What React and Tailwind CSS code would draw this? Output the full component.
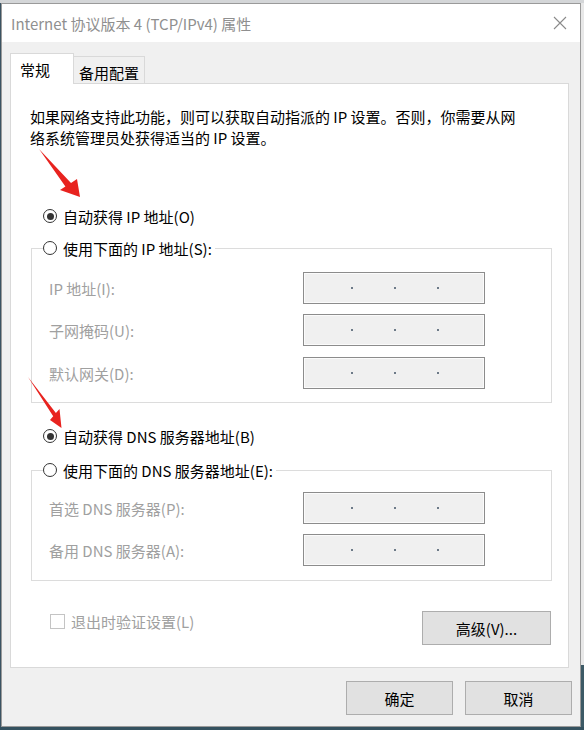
import React from 'react';

// Windows 10 "Internet 协议版本 4 (TCP/IPv4) 属性" dialog, 常规 tab.

const FONT = "font-['Noto_Sans_CJK_SC','Noto_Sans',sans-serif]";

function Radio({ checked = false }) {
  return (
    <span className="flex h-[14px] w-[14px] shrink-0 items-center justify-center rounded-full border border-[#333333] bg-white">
      {checked && <span className="h-[7px] w-[7px] rounded-full bg-[#333333]" />}
    </span>
  );
}

function IpBox() {
  return (
    <div className="flex h-[32px] w-[182px] items-center gap-[41px] border border-[#8c8c8c] bg-[#f0f0f0] pl-[47px] shadow-[inset_0_0_0_1px_#fbfbfb]">
      <span className="h-[2px] w-[2px] bg-[#6d7a88]" />
      <span className="h-[2px] w-[2px] bg-[#6d7a88]" />
      <span className="h-[2px] w-[2px] bg-[#6d7a88]" />
    </div>
  );
}

function Field({ label, className = '' }) {
  return (
    <div className={`flex items-center ${className}`}>
      <span className="w-[254px] text-[#a0a0a0]">{label}</span>
      <IpBox />
    </div>
  );
}

function Group({ label, children, className = '' }) {
  return (
    <fieldset className={`ml-[20px] w-[521px] border border-[#dcdcdc] ${className}`}>
      <legend className="ml-[11px] flex h-[20px] items-center gap-[6px] pr-[3px]">
        <Radio />
        <span>{label}</span>
      </legend>
      <div className="pl-[17px]">{children}</div>
    </fieldset>
  );
}

function Button({ children, className = '' }) {
  return (
    <button className={`flex h-[34px] items-center justify-center border border-[#adadad] bg-[#e1e1e1] text-black ${className}`}>
      {children}
    </button>
  );
}

function Arrows() {
  // red annotation arrows drawn over the dialog
  return (
    <svg className="pointer-events-none absolute left-0 top-0" width="584" height="730">
      <polygon points="39,149 71,183 77,179 80,197 60,190 65.4,186.5" fill="#e8231f" />
      <polygon points="28,377 55.9,412.9 59.5,409 61.5,428 50,420 53.2,416.2" fill="#e8231f" />
    </svg>
  );
}

export default function App() {
  return (
    <div className={`relative flex h-[730px] w-[584px] flex-col overflow-hidden bg-[#34515f] text-[15px] leading-[21px] text-black ${FONT}`}>
      <div className="h-[3px] bg-[#d4d6d8]" />
      <div className="flex">
        <div className="w-[1px] bg-[#3b5362]" />
        <div className="flex h-[724px] w-[580px] flex-col border border-[#9a9a9a] bg-[#f0f0f0]">
          {/* title bar */}
          <div className="flex h-[38px] items-center justify-between bg-white pl-[9px] pr-[13px]">
            <span className="text-[#8f8f8f]">Internet 协议版本 4 (TCP/IPv4) 属性</span>
            <svg width="14" height="14" viewBox="0 0 14 14">
              <path d="M1 1L13 13M13 1L1 13" stroke="#8a8a8a" strokeWidth="1.1" fill="none" />
            </svg>
          </div>

          {/* tabs */}
          <div className="mt-[11px] flex items-end pl-[8px]">
            <div className="relative z-10 -mb-px h-[31px] w-[64px] border border-b-0 border-[#d9d9d9] bg-white pl-[9px] pt-[5px]">
              常规
            </div>
            <div className="h-[27px] w-[71px] border border-b-0 border-l-0 border-[#d9d9d9] bg-[#f0f0f0] pl-[5px] pt-[5px]">
              备用配置
            </div>
          </div>

          {/* panel */}
          <div className="ml-[8px] flex h-[585px] w-[559px] flex-col border border-[#d9d9d9] bg-white">
            <p className="pl-[19px] pt-[22px]">
              如果网络支持此功能，则可以获取自动指派的 IP 设置。否则，你需要从网
              <br />
              络系统管理员处获得适当的 IP 设置。
            </p>

            <div className="ml-[32px] mt-[58px] flex h-[20px] items-center gap-[6px]">
              <Radio checked />
              <span>自动获得 IP 地址(O)</span>
            </div>

            <Group label="使用下面的 IP 地址(S):" className="mt-[12px] pb-[13px]">
              <Field label="IP 地址(I):" className="mt-[14px]" />
              <Field label="子网掩码(U):" className="mt-[10px]" />
              <Field label="默认网关(D):" className="mt-[11px]" />
            </Group>

            <div className="ml-[32px] mt-[23px] flex h-[20px] items-center gap-[6px]">
              <Radio checked />
              <span>自动获得 DNS 服务器地址(B)</span>
            </div>

            <Group label="使用下面的 DNS 服务器地址(E):" className="mt-[14px] pb-[14px]">
              <Field label="首选 DNS 服务器(P):" className="mt-[12px]" />
              <Field label="备用 DNS 服务器(A):" className="mt-[10px]" />
            </Group>

            <div className="mt-[30px] flex items-start justify-between pl-[39px] pr-[17px]">
              <div className="flex h-[20px] items-center gap-[6px]">
                <span className="h-[15px] w-[15px] border border-[#c4c4c4] bg-white" />
                <span className="text-[#a0a0a0]">退出时验证设置(L)</span>
              </div>
              <Button className="w-[129px]">高级(V)...</Button>
            </div>
          </div>

          {/* dialog buttons */}
          <div className="mt-[13px] flex justify-end gap-[12px] pr-[8px]">
            <Button className="w-[107px]">确定</Button>
            <Button className="w-[107px]">取消</Button>
          </div>
        </div>
        <div className="flex w-[3px] flex-col">
          <div className="h-[662px] bg-[#e8e8e8]" />
          <div className="flex-1 bg-[#3d5a66]" />
        </div>
      </div>
      <Arrows />
    </div>
  );
}
